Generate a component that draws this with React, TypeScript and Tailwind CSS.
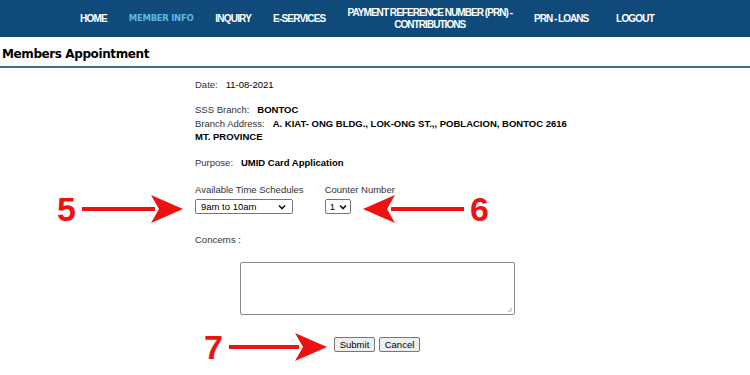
import React from 'react';

const navFont = { fontFamily: '"Liberation Sans", Arial, sans-serif' };

const Arrow: React.FC<{ dir: 'right' | 'left'; width: number }> = ({ dir, width }) => (
    <svg width={width} height="30" viewBox={`0 0 ${width} 30`}>
        {dir === 'right' ? (
            <>
                <rect x="0" y="13" width={width - 28} height="4" fill="#ee1111" />
                <polygon points={`${width - 32},1 ${width},15 ${width - 32},29 ${width - 24},15`} fill="#ee1111" />
            </>
        ) : (
            <>
                <rect x="28" y="13" width={width - 28} height="4" fill="#ee1111" />
                <polygon points={`32,1 0,15 32,29 24,15`} fill="#ee1111" />
            </>
        )}
    </svg>
);

const Chevron = () => (
    <svg width="8" height="6" viewBox="0 0 8 6"><path d="M1 1.5 L4 4.5 L7 1.5" stroke="#111" strokeWidth="1.6" fill="none" /></svg>
);

export default function App() {
    return (
        <div className="relative w-[750px] h-[375px] bg-white overflow-hidden text-[#333]" style={navFont}>
            <nav className="h-[37px] bg-[#0f4a7b] flex items-center pl-[80px] gap-[22px] text-white font-bold text-[10px] tracking-[-0.8px]">
                <span>HOME</span>
                <span className="text-[#5ab8ea] tracking-[-0.3px] text-[8.5px]" style={{ fontFamily: '"DejaVu Sans", Verdana, sans-serif' }}>MEMBER INFO</span>
                <span>INQUIRY</span>
                <span>E-SERVICES</span>
                <span className="text-center leading-[12px] tracking-[-0.95px]">PAYMENT REFERENCE NUMBER (PRN) -<br />CONTRIBUTIONS</span>
                <span className="tracking-[-1px]">PRN - LOANS</span>
                <span className="ml-[6px]">LOGOUT</span>
            </nav>

            <h1 className="mt-[8px] pl-[2px] text-[12px] font-bold text-black tracking-[-0.4px]" style={{ fontFamily: '"DejaVu Sans", Verdana, sans-serif' }}>
                Members Appointment
            </h1>
            <div className="mt-[3px] h-[2px] bg-[#3f6e80]" />

            <div className="pl-[195px] pt-[10px] text-[9.5px] leading-[13px]">
                <div>Date:&nbsp;&nbsp; <span className="text-black">11-08-2021</span></div>

                <div className="mt-[12px]">SSS Branch:&nbsp;&nbsp; <span className="font-bold text-black">BONTOC</span></div>
                <div className="mt-[1px]">
                    Branch Address:&nbsp;&nbsp; <span className="font-bold text-black">A. KIAT- ONG BLDG., LOK-ONG ST.,, POBLACION, BONTOC 2616</span>
                </div>
                <div className="font-bold text-black">MT. PROVINCE</div>

                <div className="mt-[13px]">Purpose:&nbsp;&nbsp; <span className="font-bold text-black">UMID Card Application</span></div>

                <div className="mt-[14px] flex gap-[21px]">
                    <div className="flex flex-col gap-[3px]">
                        <span>Available Time Schedules</span>
                        <div className="w-[98px] h-[15px] border border-[#767676] rounded-[2px] flex items-center justify-between pl-[5px] pr-[6px] text-black">
                            <span>9am to 10am</span>
                            <Chevron />
                        </div>
                    </div>
                    <div className="flex flex-col gap-[3px]">
                        <span>Counter Number</span>
                        <div className="w-[26px] h-[15px] border border-[#767676] rounded-[2px] flex items-center justify-between pl-[4px] pr-[3px] text-black">
                            <span>1</span>
                            <Chevron />
                        </div>
                    </div>
                </div>

                <div className="mt-[19px]">Concerns :</div>

                <div className="mt-[16px] ml-[45px] w-[275px] h-[53px] border border-[#8a8a8a] rounded-[2px] relative">
                    <svg className="absolute right-[1px] bottom-[1px]" width="6" height="6" viewBox="0 0 6 6">
                        <path d="M5 1 L1 5 M5 3 L3 5" stroke="#999" strokeWidth="0.8" />
                    </svg>
                </div>

                <div className="mt-[22px] ml-[139px] flex gap-[4px]">
                    <button className="h-[15px] w-[41px] border border-[#767676] bg-[#efefef] rounded-[2px] text-[9.5px] leading-[13px] text-black">Submit</button>
                    <button className="h-[15px] w-[41px] border border-[#767676] bg-[#efefef] rounded-[2px] text-[9.5px] leading-[13px] text-black">Cancel</button>
                </div>
            </div>

            {/* annotation arrows */}
            <div className="absolute left-[57px] top-[192px] flex items-center gap-[6px] text-[#ee1111] font-bold text-[34px] leading-none">
                <span>5</span>
                <Arrow dir="right" width={101} />
            </div>
            <div className="absolute left-[363px] top-[192px] flex items-center gap-[6px] text-[#ee1111] font-bold text-[34px] leading-none">
                <Arrow dir="left" width={101} />
                <span>6</span>
            </div>
            <div className="absolute left-[204px] top-[330px] flex items-center gap-[6px] text-[#ee1111] font-bold text-[34px] leading-none">
                <span>7</span>
                <Arrow dir="right" width={98} />
            </div>
        </div>
    );
}
